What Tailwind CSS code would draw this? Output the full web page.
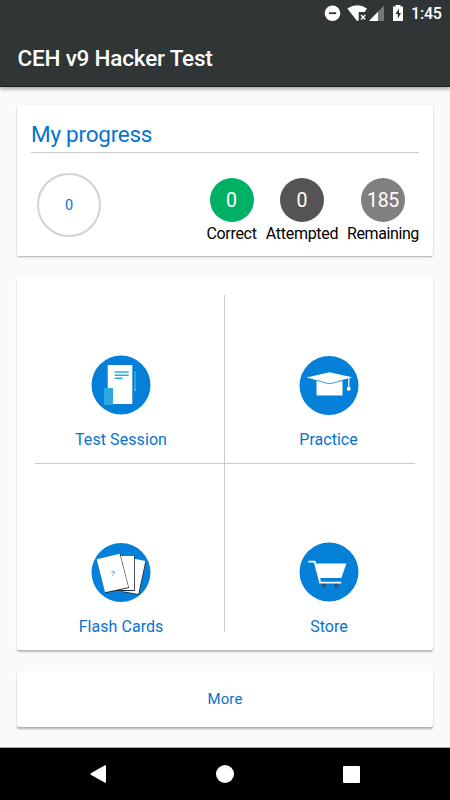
<!DOCTYPE html>
<html lang="en">
<head>
<meta charset="utf-8">
<title>CEH v9 Hacker Test</title>
<script src="https://cdn.jsdelivr.net/npm/@tailwindcss/browser@4"></script>
</head>
<body class="bg-[#fafafa] font-['Roboto','Liberation_Sans',sans-serif]">
<div class="flex h-[800px] w-[450px] flex-col overflow-hidden">
  <header class="h-[87px] shrink-0 border-b border-[#1c2222] bg-[#303535] text-white shadow-[0_2px_4px_rgba(0,0,0,0.35)]">
    <div class="flex h-[27px] items-center justify-end pr-[9px]">
      <svg class="h-[27px] w-[85px] shrink-0" viewBox="0 0 85 27">
        <circle cx="8.5" cy="13.2" r="7.8" fill="#fff"/>
        <path d="M5 13.2h7.2" stroke="#303535" stroke-width="1.8"/>
        <path d="M23.3 8.6Q33.5 1.8 43 8.6L40.7 12H34.7V20L33.3 21.3Z" fill="#fff"/>
        <path d="M37 15l4.3 4.5M41.3 15L37 19.5" stroke="#fff" stroke-width="1.4"/>
        <path d="M45 21L60 5.5V21Z" fill="#747878"/>
        <path d="M45 21L54 11.7V21Z" fill="#fff"/>
        <path d="M69 6.5h2.5V5h5v1.5H79V21H69Z" fill="#fff"/>
        <path d="M75 8.5L71.5 14h2.3v4.8L77 13h-2Z" fill="#303535"/>
      </svg>
      <span class="ml-[2px] w-[30px] whitespace-nowrap text-[16px] font-medium leading-[27px] tracking-[-0.2px]">1:45</span>
    </div>
    <h1 class="pl-[17.5px] pt-[16px] text-[22.5px] font-medium leading-[30px] tracking-[-0.2px]">CEH v9 Hacker Test</h1>
  </header>

  <main class="flex flex-1 flex-col px-[17px] pt-[18px]">
    <section class="h-[151px] shrink-0 rounded-[2px] bg-white px-[14px] shadow-[0_1px_2px_rgba(0,0,0,0.32)]">
      <h2 class="h-[48px] border-b border-[#cbcbcb] pt-[14px] text-[22.5px] leading-[30px] tracking-[-0.25px] text-[#0773cf]">My progress</h2>
      <div class="flex items-start justify-between pl-[6px]">
        <div class="mt-[20px] flex size-[64px] items-center justify-center rounded-full border-2 border-[#d2d2d2] pt-[2px] text-[14.5px] text-[#0773cf]">0</div>
        <div class="flex gap-[9px] pt-[25px] text-[16px] leading-[24px] tracking-[-0.3px] text-black">
          <div class="flex w-[51px] flex-col items-center"><span class="flex size-[44px] items-center justify-center rounded-full bg-[#00b064] pt-[2px] text-[19.5px] tracking-normal text-white">0</span>Correct</div>
          <div class="flex w-[72px] flex-col items-center"><span class="flex size-[44px] items-center justify-center rounded-full bg-[#555555] pt-[2px] text-[19.5px] tracking-normal text-white">0</span>Attempted</div>
          <div class="flex w-[72px] flex-col items-center"><span class="flex size-[44px] items-center justify-center rounded-full bg-[#808080] pt-[2px] text-[19.5px] tracking-[-0.3px] text-white">185</span><span class="whitespace-nowrap tracking-[-0.4px]">Remaining</span></div>
        </div>
      </div>
    </section>

    <section class="mt-[21px] h-[373px] shrink-0 rounded-[2px] bg-white px-[18px] py-[18px] shadow-[0_2px_2px_rgba(0,0,0,0.26)]">
      <div class="relative grid h-[337px] grid-cols-[190px_190px] grid-rows-[169px_168px] text-[16px] leading-[22px] text-[#0773cf]">
        <div class="absolute left-[189px] top-0 h-full w-px bg-[#cbcbcb]"></div>
        <div class="flex flex-col items-center border-b border-[#cbcbcb] pr-[18px] pt-[60px]">
          <svg class="size-[60px] shrink-0" viewBox="0 0 60 60">
            <circle cx="30" cy="30" r="29.5" fill="#0580d8"/>
            <path d="M16.7 10h24.6v39H16.7Z" fill="#fff"/>
            <path d="M13 34l1-1h8v17h-9Z" fill="#2ea9e0"/>
            <path d="M23.7 17h14M23.7 20.3h14M23.7 23.3h7.8" stroke="#2ea9e0" stroke-width="1.4"/>
            <path d="M44 16v18" stroke="#2ea9e0" stroke-width="1.8"/>
            <path d="M44 34v2" stroke="#a9c8e3" stroke-width="1.2"/>
          </svg>
          <span class="mt-[14px] tracking-[0.08px]">Test Session</span>
        </div>
        <div class="flex flex-col items-center border-b border-[#cbcbcb] pl-[17px] pt-[60px]">
          <svg class="size-[60px] shrink-0" viewBox="0 -0.5 60 60">
            <circle cx="30" cy="30" r="29.5" fill="#0580d8"/>
            <path d="M17.5 25h26v15h-26Z" fill="#fff"/>
            <path d="M7.5 22L30.5 16.7L53 21.7L33.5 27.2Q30.5 27.8 27.5 27.2Z" fill="#fff"/>
            <path d="M17.5 24.9L27.5 27.7Q30.5 28.3 33.5 27.7L43.5 24.9" fill="none" stroke="#0580d8" stroke-width=".8"/>
            <path d="M49.8 22.5v10" stroke="#fff" stroke-width="1.2"/>
            <circle cx="49.7" cy="33.3" r="2" fill="#fff"/>
          </svg>
          <span class="mt-[14px]">Practice</span>
        </div>
        <div class="flex flex-col items-center pr-[18px] pt-[78px]">
          <svg class="size-[60px] shrink-0" viewBox="0 -0.5 60 60">
            <circle cx="30" cy="30" r="29.5" fill="#0580d8"/>
            <path d="M44.2 17L55 19.2L48 52.5L32.5 49.7Z" fill="#202c36"/>
            <path d="M43.5 16.2L54.4 18.5L47.3 51.5L32 48.7Z" fill="#fff"/>
            <path d="M30 14h13.8v34.5H24Z" fill="#202c36"/>
            <path d="M29 13.5h14v34H24Z" fill="#fff"/>
            <path d="M6.2 17.7L29.5 12L38 45.5L14.5 50.8Z" fill="#202c36"/>
            <path d="M5.7 16.8L28.7 11.2L37.3 44.8L14 49.8Z" fill="#fff"/>
            <text x="21.8" y="33" text-anchor="middle" class="fill-[#0773cf] text-[8px]">?</text>
          </svg>
          <span class="mt-[14px] tracking-[0.05px]">Flash Cards</span>
        </div>
        <div class="flex flex-col items-center pl-[18px] pt-[78px]">
          <svg class="size-[60px] shrink-0" viewBox="0 0 60 60">
            <circle cx="30" cy="30" r="29.5" fill="#0580d8"/>
            <path d="M9.5 19.7h6.2l5.5 21H42.2" fill="none" stroke="#fff" stroke-width="1.8"/>
            <path d="M16.3 21.5h31.2L42.3 36H20.3Z" fill="#fff"/>
            <path d="M20.6 35v5.8" stroke="#fff" stroke-width="1.3"/>
            <circle cx="24.8" cy="43.6" r="1.8" fill="#303a44"/><circle cx="37.5" cy="43.6" r="1.8" fill="#303a44"/>
            <circle cx="24.8" cy="43.6" r=".6" fill="#aaa"/><circle cx="37.5" cy="43.6" r=".6" fill="#aaa"/>
          </svg>
          <span class="mt-[14px]">Store</span>
        </div>
      </div>
    </section>

    <section class="mt-[21px] flex h-[56px] shrink-0 items-center justify-center rounded-[2px] bg-white text-[15px] tracking-[0.15px] text-[#0773cf] shadow-[0_2px_2px_rgba(0,0,0,0.3)]">More</section>
  </main>

  <nav class="flex h-[53px] shrink-0 items-center justify-between border-t border-[#a5a8a7] bg-black pl-[90px] pr-[90px]">
    <svg class="h-[18px] w-[16px]" viewBox="0 0 16 18"><path d="M.8 8.3L15 .2Q16 0 16 1V17Q16 18 15 17.8L.8 9.7Q0 9 .8 8.3Z" fill="#fff"/></svg>
    <div class="size-[18px] rounded-full bg-white"></div>
    <div class="size-[17px] rounded-[1px] bg-white"></div>
  </nav>
</div>
</body>
</html>
